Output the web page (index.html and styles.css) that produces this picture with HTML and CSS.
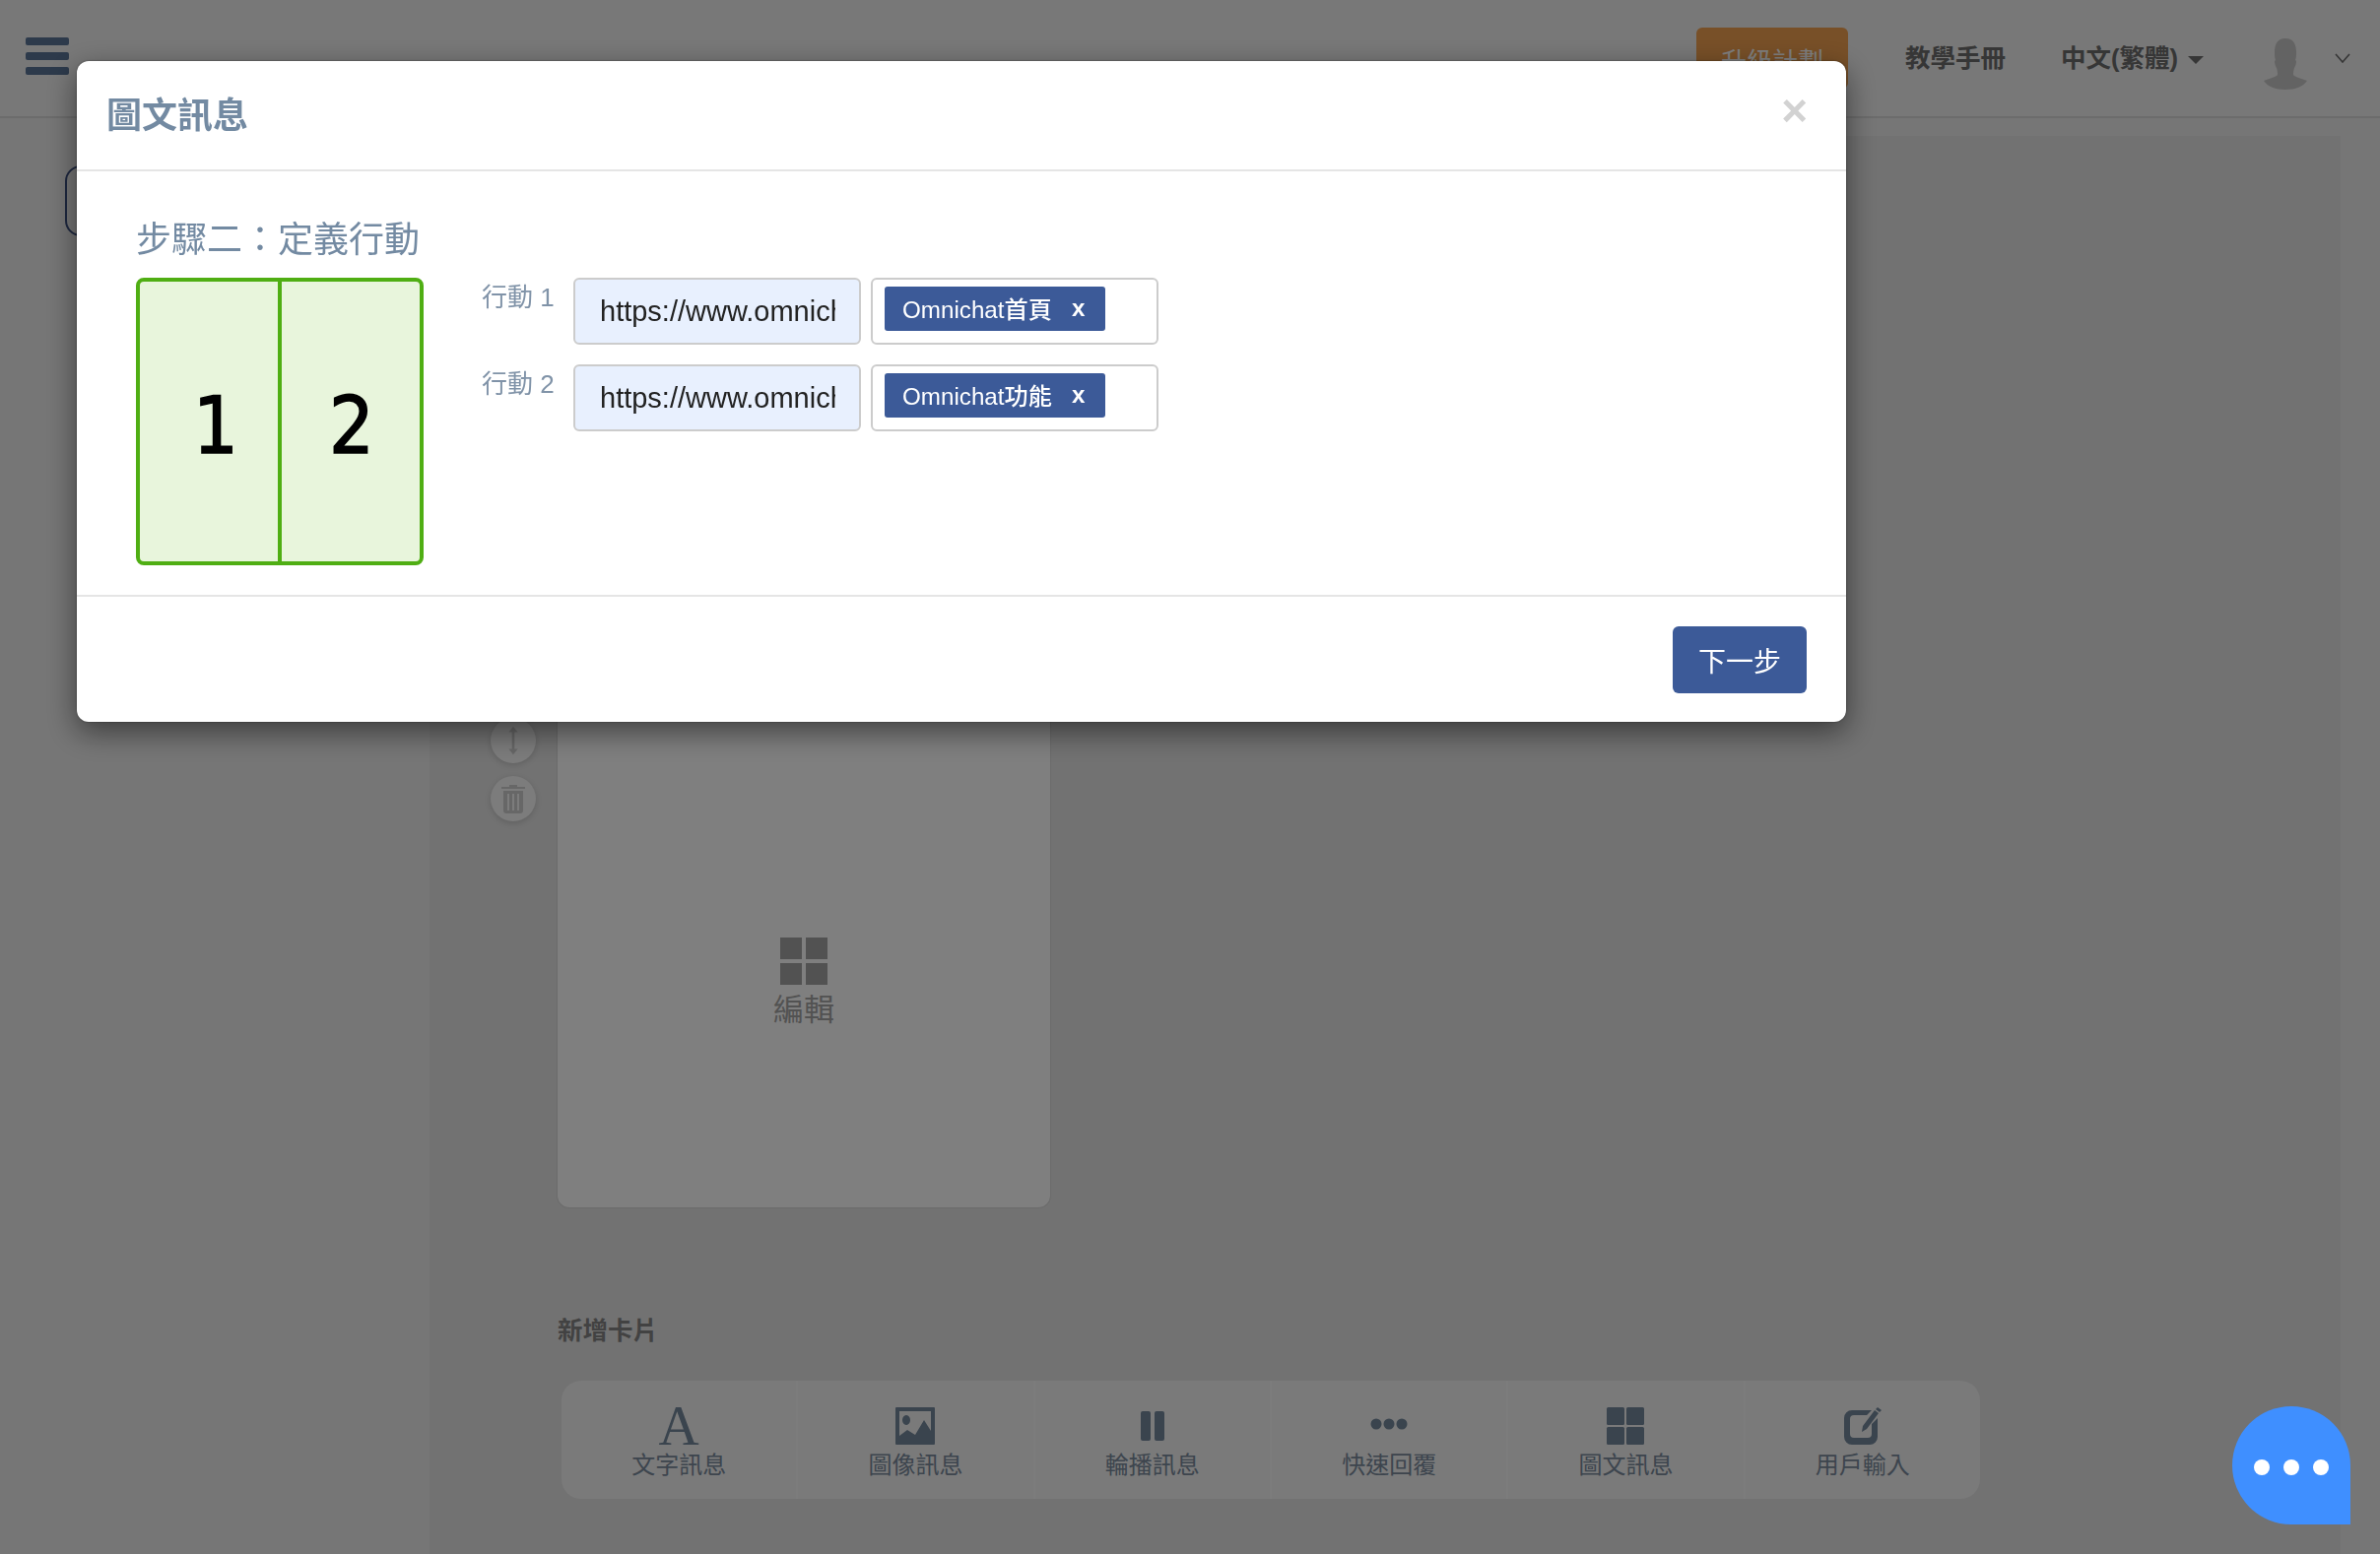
FILE: index.html
```html
<!DOCTYPE html>
<html lang="zh-Hant">
<head>
<meta charset="utf-8">
<title>圖文訊息</title>
<link rel="stylesheet" href="styles.css">
</head>
<body>
<div class="app">
  <header class="topbar">
    <div class="burger"><span></span><span></span><span></span></div>
    <div class="top-right">
      <a class="upgrade">升級計劃</a>
      <a class="nav-link manual">教學手冊</a>
      <a class="nav-link lang">中文(繁體)<i class="caret"></i></a>
      <svg class="avatar" viewBox="0 0 44 52"><path d="M22 0c-8 0-11 6-11 14 0 3 0 6 1 8l-1 1c0 3 1 5 2 7 1 3 1 5 1 7-1 2-9 4-14 6 4 6 12 9 22 9s18-3 22-9c-5-2-13-4-14-6 0-2 0-4 1-7 1-2 2-4 2-7l-1-1c1-2 1-5 1-8 0-8-3-14-11-14z"/></svg>
      <svg class="chev" viewBox="0 0 16 10"><path d="M1 1l7 8 7-8"/></svg>
    </div>
  </header>
  <div class="main">
    <aside class="sidebar"><div class="side-box"></div></aside>
    <section class="panel">
      <div class="card-row">
        <div class="controls">
          <div class="round"><svg viewBox="0 0 20 46"><path d="M10 1l-7 9h5v26H3l7 9 7-9h-5V10h5z"/></svg></div>
          <div class="round"><svg viewBox="0 0 26 30"><path d="M9 3V1h8v2h8v2H1V3zM3 7h20v20a3 3 0 0 1-3 3H6a3 3 0 0 1-3-3zm4 3v17h2V10zm5 0v17h2V10zm5 0v17h2V10z" fill-rule="evenodd"/></svg></div>
        </div>
        <div class="card">
          <svg class="grid-icon" viewBox="0 0 48 48"><path d="M0 0h22v22H0zM26 0h22v22H26zM0 26h22v22H0zM26 26h22v22H26z"/></svg>
          <span class="card-label">編輯</span>
        </div>
      </div>
      <h3 class="add-title">新增卡片</h3>
      <div class="toolbar">
        <div class="tool"><span class="tool-a">A</span><span>文字訊息</span></div>
        <div class="tool"><span class="tool-ic"><svg class="ic" viewBox="0 0 40 38"><path fill-rule="evenodd" d="M1 0h38a1 1 0 0 1 1 1v36a1 1 0 0 1-1 1H1a1 1 0 0 1-1-1V1a1 1 0 0 1 1-1zm3 4v25l8-6 8 5 9-15 7 11V4zM11 8a4 5 0 1 0 .01 0z"/></svg></span><span>圖像訊息</span></div>
        <div class="tool"><span class="tool-ic"><svg class="ic" viewBox="0 0 40 38"><rect x="8" y="4" width="10" height="30" rx="2"/><rect x="22" y="4" width="10" height="30" rx="2"/></svg></span><span>輪播訊息</span></div>
        <div class="tool"><span class="tool-ic"><svg class="ic" viewBox="0 0 40 38"><circle cx="7" cy="17" r="5.5"/><circle cx="20" cy="17" r="5.5"/><circle cx="33" cy="17" r="5.5"/></svg></span><span>快速回覆</span></div>
        <div class="tool"><span class="tool-ic"><svg class="ic" viewBox="0 0 40 38"><rect x="1" y="0" width="18" height="18" rx="1.5"/><rect x="21" y="0" width="18" height="18" rx="1.5"/><rect x="1" y="20" width="18" height="18" rx="1.5"/><rect x="21" y="20" width="18" height="18" rx="1.5"/></svg></span><span>圖文訊息</span></div>
        <div class="tool"><span class="tool-ic"><svg class="ic" viewBox="0 0 40 38"><path fill-rule="evenodd" d="M9 3h20l-5 5H11a4 4 0 0 0-4 4v15a4 4 0 0 0 4 4h14a4 4 0 0 0 4-4V17l6-6v19a8 8 0 0 1-8 8H9a8 8 0 0 1-8-8V11a8 8 0 0 1 8-8z"/><path d="M32 3l4 3-12 16-5 3 1-6zM35 0l4 3-2 2-4-3z"/></svg></span><span>用戶輸入</span></div>
      </div>
    </section>
  </div>
</div>

<div class="overlay">
  <div class="modal">
    <div class="modal-head">
      <h2 class="modal-title">圖文訊息</h2>
      <span class="close">×</span>
    </div>
    <div class="modal-body">
      <h3 class="step">步驟二：定義行動</h3>
      <div class="step-row">
        <div class="layout">
          <div class="cell first">1</div>
          <div class="cell">2</div>
        </div>
        <div class="actions">
          <div class="action">
            <label class="action-label">行動 1</label>
            <input class="url" type="text" readonly value="https://www.omnichat.ai/">
            <div class="tags"><span class="tag">Omnichat首頁<b class="tag-x">x</b></span></div>
          </div>
          <div class="action">
            <label class="action-label">行動 2</label>
            <input class="url" type="text" readonly value="https://www.omnichat.ai/">
            <div class="tags"><span class="tag">Omnichat功能<b class="tag-x">x</b></span></div>
          </div>
        </div>
      </div>
    </div>
    <div class="modal-foot">
      <button class="next" type="button">下一步</button>
    </div>
  </div>
</div>

<div class="bubble"><i></i><i></i><i></i></div>
</body>
</html>
```

FILE: styles.css
```css
* { box-sizing: border-box; }
html, body { margin: 0; height: 1578px; overflow: hidden; }
body {
  background: #ececec;
  font-family: "Liberation Sans", "Noto Sans CJK TC", sans-serif;
  color: #666;
}
.app { display: flex; flex-direction: column; height: 1578px; }

/* top bar */
.topbar {
  flex: none;
  height: 120px;
  display: flex;
  align-items: flex-start;
  padding: 0 30px 0 26px;
  background: #f0f0f0;
  border-bottom: 2px solid #d8d8d8;
}
.burger { display: flex; flex-direction: column; gap: 7px; margin-top: 38px; }
.burger span { display: block; width: 44px; height: 8px; border-radius: 2px; background: #5a7496; }
.top-right { margin-left: auto; display: flex; align-items: flex-start; }
.upgrade {
  width: 154px; height: 62px; margin-top: 28px;
  padding-top: 2px;
  display: flex; align-items: center; justify-content: center;
  border-radius: 6px;
  background: #f0a050;
  color: #fff;
  font-size: 26px;
}
.nav-link { font-size: 25.5px; line-height: 36px; margin-top: 41px; font-weight: 700; color: #6c6c6c; display: flex; align-items: center; }
.manual { margin-left: 58px; }
.lang { margin-left: 56px; }
.caret {
  width: 0; height: 0; margin-left: 10px; margin-top: 4px;
  border-left: 8px solid transparent; border-right: 8px solid transparent; border-top: 8px solid #6c6c6c;
}
.avatar { width: 44px; height: 52px; margin: 39px 0 0 61px; fill: #c6c6c6; }
.chev { width: 16px; height: 10px; margin: 54px 0 0 28px; fill: none; stroke: #6c6c6c; stroke-width: 1.6; }

/* page */
.main { flex: 1; display: flex; min-height: 0; }
.sidebar { flex: none; width: 436px; padding: 48px 0 0 66px; }
.side-box { width: 300px; height: 72px; border: 2px solid #3c5080; border-radius: 16px; }
.panel {
  flex: 1;
  margin: 18px 40px 0 0;
  padding: 362px 0 0 62px;
  background: #e4e4e4;
  min-width: 0;
}
.card-row { display: flex; }
.controls { width: 46px; margin-right: 22px; padding-top: 229px; display: flex; flex-direction: column; gap: 13px; }
.round {
  width: 46px; height: 46px; border-radius: 50%;
  background: #f8f8f8;
  box-shadow: 0 2px 6px rgba(0,0,0,.15);
  display: flex; align-items: center; justify-content: center;
}
.round svg { height: 30px; width: 26px; fill: #cecece; }
.card {
  width: 500px; height: 726px;
  display: flex; flex-direction: column; align-items: center; justify-content: flex-end;
  padding-bottom: 177px;
  background: #fff;
  border-radius: 0 0 12px 12px;
  box-shadow: 0 0 2px rgba(0,0,0,.2);
}
.grid-icon { width: 48px; height: 48px; fill: #a4a4a4; }
.card-label { margin-top: 3px; font-size: 31px; line-height: 46px; color: #a4a4a4; }
.add-title { margin: 107px 0 33px 68px; font-size: 25.5px; line-height: 36px; font-weight: 700; color: #848484; }
.toolbar {
  margin-left: 72px;
  width: 1440px; height: 120px;
  display: flex;
  background: #f4f4f4;
  border-radius: 20px;
  overflow: hidden;
}
.tool {
  flex: 1;
  display: flex; flex-direction: column; align-items: center;
  padding-top: 24px;
  font-size: 24px; line-height: 36px;
  color: #7a8a9c;
  border-left: 2px solid #f8f8f8;
}
.tool:first-child { border-left: 0; }
.tool-a { height: 44px; font-family: "Liberation Serif", serif; font-size: 57px; line-height: 44px; color: #74889c; }
.tool-ic { height: 44px; display: flex; align-items: flex-start; padding-top: 3px; }
.ic { width: 40px; height: 38px; fill: #74889c; }

/* modal */
.overlay {
  position: fixed; inset: 0;
  padding: 62px 0 0 78px;
  background: rgba(0,0,0,.5);
}
.modal {
  width: 1796px;
  background: #fff;
  border-radius: 12px;
  box-shadow: 0 10px 30px rgba(0,0,0,.5), 0 0 2px rgba(0,0,0,.5);
}
.modal-head {
  height: 112px;
  padding: 0 39px 0 30px;
  display: flex; justify-content: space-between; align-items: flex-start;
  border-bottom: 2px solid #e5e5e5;
}
.modal-title { margin: 33px 0 0; font-size: 36px; line-height: 46px; font-weight: 700; color: #738aa2; }
.close { margin-top: 25px; font-size: 46px; line-height: 50px; font-weight: 700; color: #d2d2d2; }
.modal-body { height: 430px; padding: 45px 60px 0; }
.step { margin: 0 0 13px; font-size: 36px; line-height: 50px; font-weight: 400; color: #738aa2; }
.step-row { display: flex; align-items: flex-start; }
.layout {
  flex: none;
  width: 292px; height: 292px;
  display: flex;
  background: #e8f5dc;
  border: 4px solid #4fae13;
  border-radius: 8px;
}
.cell {
  flex: none;
  width: 50%;
  padding-top: 8px;
  display: flex; align-items: center; justify-content: center;
  font-family: "DejaVu Sans Condensed", "DejaVu Sans", sans-serif;
  font-size: 80px;
  color: #000;
  -webkit-text-stroke: 1.5px #000;
}
.cell.first { border-right: 4px solid #4fae13; padding-left: 14px; width: calc(50% + 2px); }
.actions { margin-left: 59px; display: flex; flex-direction: column; gap: 20px; }
.action { display: flex; align-items: flex-start; }
.action-label { width: 74px; margin-right: 19px; padding-top: 3px; font-size: 26px; line-height: 34px; color: #8093a8; white-space: nowrap; }
.url {
  width: 292px; height: 68px;
  padding: 0 24px 0 25px;
  font: 29px "Liberation Sans", sans-serif;
  color: #222;
  background: #e8f0fe;
  border: 2px solid #ccc;
  border-radius: 6px;
  outline: 0;
}
.tags {
  width: 292px; height: 68px;
  margin-left: 10px;
  padding: 7px 12px;
  border: 2px solid #ccc;
  border-radius: 6px;
  background: #fff;
}
.tag {
  display: inline-flex; align-items: center;
  width: 224px; height: 45px;
  padding-left: 18px;
  padding-bottom: 2px;
  border-radius: 3px;
  background: #3c5a98;
  color: #fff;
  font-size: 24.2px;
  font-weight: 500;
  white-space: nowrap;
}
.tag-x { margin-left: 20px; font-weight: 700; }
.modal-foot {
  height: 129px;
  padding: 30px 40px 0 0;
  display: flex; justify-content: flex-end; align-items: flex-start;
  border-top: 2px solid #e5e5e5;
}
.next {
  width: 136px; height: 68px;
  border: 0; border-radius: 6px;
  background: #3c5a98;
  color: #fff;
  font: 28px "Liberation Sans", "Noto Sans CJK TC", sans-serif;
}

/* chat bubble above the overlay */
.bubble {
  position: fixed; left: 2266px; top: 1428px;
  width: 120px; height: 120px;
  padding-top: 4px;
  display: flex; align-items: center; justify-content: center; gap: 14px;
  background: #3f8fff;
  border-radius: 50% 50% 0 50%;
}
.bubble i { width: 16px; height: 16px; border-radius: 50%; background: #fff; }
```
